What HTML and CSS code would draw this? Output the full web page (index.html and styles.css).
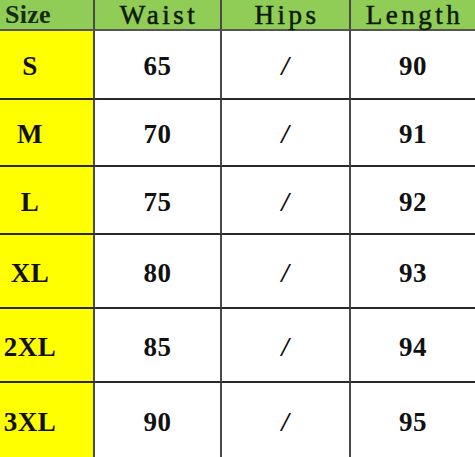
FILE: index.html
```html
<!DOCTYPE html>
<html>
<head>
<meta charset="utf-8">
<link rel="stylesheet" href="styles.css">
</head>
<body>
<div class="chart">
  <div class="cell head size-head">Size</div>
  <div class="cell head mono">Waist</div>
  <div class="cell head mono">Hips</div>
  <div class="cell head mono last">Length</div>

  <div class="cell size">S</div>
  <div class="cell val">65</div>
  <div class="cell val slash">/</div>
  <div class="cell val last">90</div>

  <div class="cell size">M</div>
  <div class="cell val">70</div>
  <div class="cell val slash">/</div>
  <div class="cell val last">91</div>

  <div class="cell size">L</div>
  <div class="cell val">75</div>
  <div class="cell val slash">/</div>
  <div class="cell val last">92</div>

  <div class="cell size">XL</div>
  <div class="cell val">80</div>
  <div class="cell val slash">/</div>
  <div class="cell val last">93</div>

  <div class="cell size">2XL</div>
  <div class="cell val">85</div>
  <div class="cell val slash">/</div>
  <div class="cell val last">94</div>

  <div class="cell size bottom">3XL</div>
  <div class="cell val bottom">90</div>
  <div class="cell val slash bottom">/</div>
  <div class="cell val last bottom">95</div>
</div>
</body>
</html>
```
FILE: styles.css
```css
html, body {
  margin: 0;
  padding: 0;
  background: #ffffff;
}
.chart {
  width: 475px;
  height: 457px;
  display: grid;
  grid-template-columns: 95px 127px 129px 124px;
  grid-template-rows: 31px 69px 67px 68px 74px 74px 74px;
  font-family: "Liberation Serif", "Times New Roman", serif;
  color: #111;
}
.cell {
  box-sizing: border-box;
  display: flex;
  align-items: center;
  justify-content: center;
  border-right: 2px solid #4a4a4a;
  border-bottom: 2px solid #2a2a2a;
  font-weight: bold;
  font-size: 27px;
  letter-spacing: 0.5px;
}
.cell.last {
  border-right: none;
}
.cell.bottom {
  border-bottom: none;
}
.head {
  background: #8fcd57;
  border-bottom-color: #555;
  padding-top: 1px;
}
.size-head {
  justify-content: flex-start;
  padding-left: 5px;
  font-size: 26px;
  letter-spacing: 0.3px;
  color: #1a2a10;
}
.mono {
  font-family: "Liberation Serif", "Times New Roman", serif;
  font-weight: normal;
  font-size: 27px;
  letter-spacing: 3.5px;
  color: #0e1a08;
  -webkit-text-stroke: 0.5px #0e1a08;
  padding-left: 3px;
}
.size {
  background: #ffff00;
  justify-content: center;
  padding-right: 33px;
  padding-top: 4px;
}
.val {
  padding-top: 4px;
}
.slash {
  font-weight: bold;
  font-style: italic;
}
```
